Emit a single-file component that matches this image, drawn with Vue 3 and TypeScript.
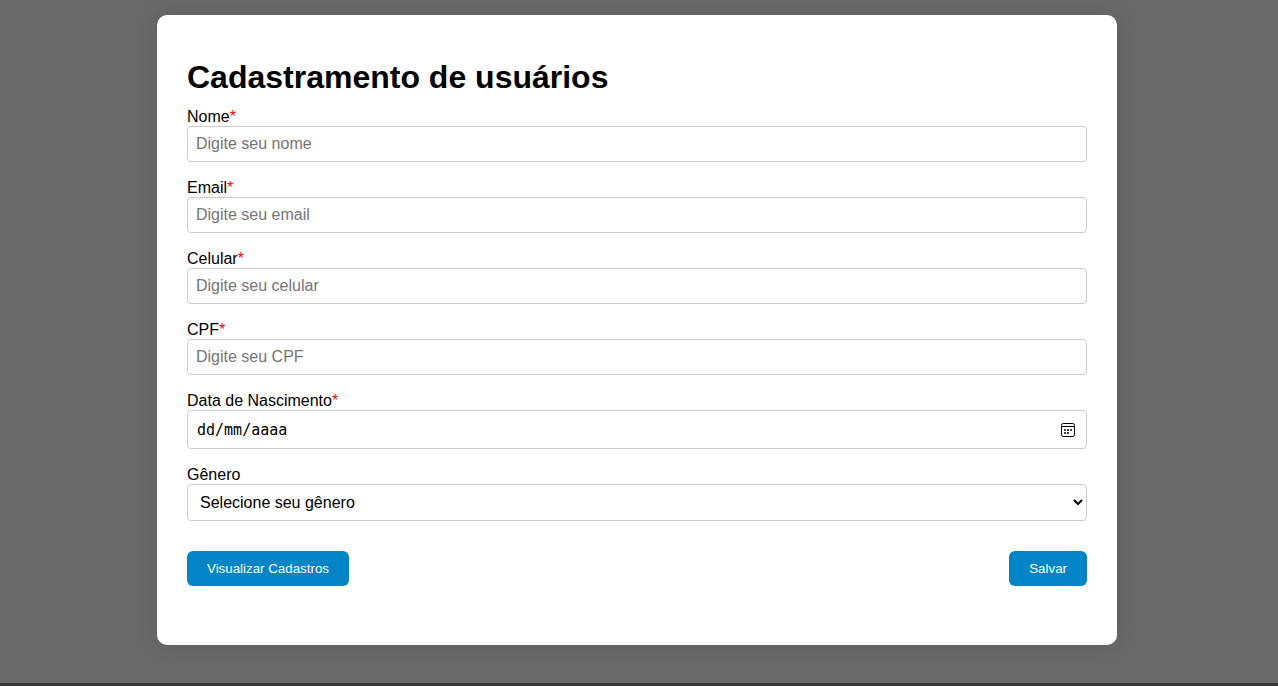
<script setup lang="ts">
import { reactive } from 'vue'

interface TextField {
  id: 'nome' | 'email' | 'celular' | 'cpf'
  label: string
  type: string
  placeholder: string
}

const fields: TextField[] = [
  { id: 'nome', label: 'Nome', type: 'text', placeholder: 'Digite seu nome' },
  { id: 'email', label: 'Email', type: 'email', placeholder: 'Digite seu email' },
  { id: 'celular', label: 'Celular', type: 'tel', placeholder: 'Digite seu celular' },
  { id: 'cpf', label: 'CPF', type: 'text', placeholder: 'Digite seu CPF' },
]

const form = reactive({ nome: '', email: '', celular: '', cpf: '', nascimento: '', genero: '' })
</script>

<template>
  <div class="page">
    <main class="content">
      <form class="card" @submit.prevent>
        <h1>Cadastramento de usuários</h1>

        <div v-for="field in fields" :key="field.id" class="field">
          <label :for="field.id">{{ field.label }}<span class="required">*</span></label>
          <input
            :id="field.id"
            v-model="form[field.id]"
            class="control"
            :type="field.type"
            :placeholder="field.placeholder"
          />
        </div>

        <div class="field">
          <label for="nascimento">Data de Nascimento<span class="required">*</span></label>
          <div class="control date">
            <input id="nascimento" v-model="form.nascimento" type="text" inputmode="numeric" placeholder="dd/mm/aaaa" />
            <button type="button" class="picker" aria-label="Abrir calendário">
              <svg width="14" height="14" viewBox="0 0 14 14" aria-hidden="true">
                <rect x="0.5" y="0.5" width="13" height="13" rx="1.8" fill="none" stroke="#000" />
                <path d="M1 3.5H13" stroke="#000" />
                <path
                  d="M3 6h2v2H3zM6 6h2v2H6zM9 6h2v2H9zM3 9h2v2H3zM6 9h2v2H6z"
                  fill="#444"
                />
              </svg>
            </button>
          </div>
        </div>

        <div class="field">
          <label for="genero">Gênero</label>
          <select id="genero" v-model="form.genero" class="control select">
            <option value="">Selecione seu gênero</option>
            <option value="feminino">Feminino</option>
            <option value="masculino">Masculino</option>
            <option value="outro">Outro</option>
          </select>
        </div>

        <div class="actions">
          <button type="button" class="btn">Visualizar Cadastros</button>
          <button type="submit" class="btn">Salvar</button>
        </div>
      </form>
    </main>
    <footer class="footer"></footer>
  </div>
</template>

<style>
body {
  margin: 0;
  background: #696969;
}
</style>

<style scoped>
.page {
  display: flex;
  flex-direction: column;
  min-height: 100vh;
  font-family: 'Liberation Sans', Arial, sans-serif;
  font-size: 16px;
  line-height: 18px;
  color: #000;
}

.content {
  flex: 1;
  padding: 15px 4px 15px 0;
}

.card {
  box-sizing: border-box;
  max-width: 960px;
  margin: 0 auto;
  padding: 44px 30px 59px;
  background: #fff;
  border-radius: 10px;
  box-shadow: 0 0 20px rgba(0, 0, 0, 0.1);
}

h1 {
  margin: 0 0 12px;
  font-size: 32px;
  line-height: 37px;
  font-weight: bold;
}

.field {
  display: flex;
  flex-direction: column;
  margin-bottom: 17px;
}

.required {
  color: #f00;
}

.control {
  box-sizing: border-box;
  width: 100%;
  height: 36px;
  padding: 8px;
  border: 1px solid #ccc;
  border-radius: 4px;
  background: #fff;
  font: inherit;
  color: #000;
}

.control::placeholder {
  color: #757575;
}

.date {
  display: flex;
  align-items: center;
  height: 39px;
  padding: 0 11px 0 9px;
}

.date input {
  flex: 1;
  min-width: 0;
  padding: 0;
  border: 0;
  outline: 0;
  background: transparent;
  font-family: 'DejaVu Sans Mono', monospace;
  font-size: 15px;
  line-height: 18px;
}

.date input::placeholder {
  color: #000;
}

.picker {
  display: flex;
  padding: 0;
  border: 0;
  background: none;
  cursor: pointer;
}

.select {
  height: 37px;
  padding: 0 0 0 8px;
}

.actions {
  display: flex;
  justify-content: space-between;
  margin-top: 30px;
}

.btn {
  height: 35px;
  padding: 0 20px;
  border: 0;
  border-radius: 6px;
  background: #0284c7;
  color: #fff;
  font-family: 'Liberation Sans', Arial, sans-serif;
  font-weight: 500;
  cursor: pointer;
}

.footer {
  height: 3px;
  background: #393939;
}
</style>
